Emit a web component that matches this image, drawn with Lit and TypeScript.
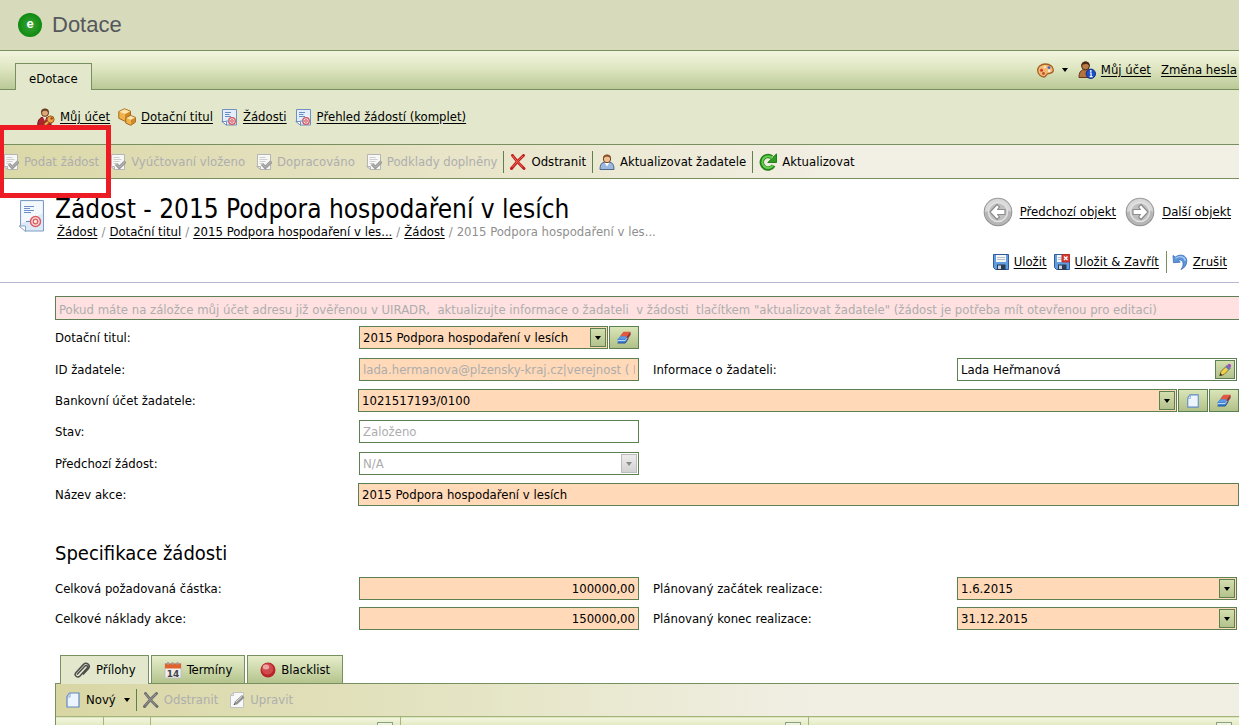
import { LitElement, html, css, svg, TemplateResult } from "lit";
import { customElement } from "lit/decorators.js";

const icon = (size: number, body: TemplateResult) =>
  html`<svg class="icon" width=${size} height=${size} viewBox="0 0 ${size} ${size}" aria-hidden="true">${body}</svg>`;

const userKeyIcon = () => icon(18, svg`
  <path d="M.8 17.500c-.4-4.500 1.700-7.500 4.400-8.200l2.600 1 2.400-1c2.800.7 4.100 3.700 3.900 8.200z" fill="#a9262c" stroke="#75151b"/>
  <path d="M5.800 8.500l2 4.500 1.900-4.500z" fill="#f4e8df"/>
  <circle cx="8" cy="4.900" r="3.500" fill="#dfa878" stroke="#5d3a1e"/>
  <path d="M4 5C3.800 1.500 6 .4 8 .4s4.200 1 3.900 4.600c-1-1.800-2.400-2.200-3.900-2.200S5 3.200 4 5z" fill="#6b3f20"/>
  <path d="M7.500 17.200l4.200-3.800" stroke="#a35a17" stroke-width="3.400"/><path d="M8 16.700l3.800-3.400" stroke="#f0b45c" stroke-width="1.600"/>
  <circle cx="13.600" cy="11.400" r="3.500" fill="#eda64c" stroke="#a35a17"/><circle cx="14.600" cy="10.400" r="1.200" fill="#8b4a10"/>`);

const boxesIcon = () => icon(18, svg`
  <path d="M.8 3.500L6.500.8l6 2.400v6.600l-5.500 3.500-6.200-3z" fill="#f0b24c" stroke="#a5691a"/>
  <path d="M1.400 3.700L6.500 1.300l5.500 2.100-5 2.700z" fill="#fde5ad"/><path d="M7.100 6.300l4.900-2.600v5.800l-4.900 3.200z" fill="#cf8825"/>
  <path d="M7.800 9.800l4.700-2.300 4.900 1.900v4.800l-4.500 3.100-5.100-2.200z" fill="#f0b24c" stroke="#a5691a"/>
  <path d="M8.500 10l4-1.900 4.200 1.500-3.900 2.200z" fill="#fde7b0"/><path d="M13 12.100l3.900-2.200v4l-3.900 2.700z" fill="#cf8825"/>`);

const requestIcon = () => icon(17, svg`
  <path d="M1.500.500h14v15.500H5.500l-4-3.500z" fill="#e3eefa" stroke="#7190bd"/>
  <path d="M.8 12.500h4.700v3.700z" fill="#fff" stroke="#7190bd"/>
  <path d="M4 3.500h6M4 5.500h4.500M4 7.500h6" stroke="#6a8cc4"/>
  <circle cx="11" cy="12" r="3.300" fill="#f9dcdc" stroke="#d0575f" stroke-width="1.300"/><circle cx="11" cy="12" r="1.300" fill="none" stroke="#d0575f"/>
  <path d="M5 12h4" stroke="#8296bb"/>`);

const bigRequestIcon = () => html`<svg class="icon" width="28" height="34" viewBox="0 0 28 34" aria-hidden="true">
  <path d="M2.500 1.500h23v30.500h-18l-5-5z" fill="#dce9f7" stroke="#7f9cc0"/>
  <path d="M3.500 2.500h21v12l-21 10z" fill="#f3f8fd"/>
  <path d="M1 27h6.500v5.500z" fill="#fff" stroke="#8aa0c0"/>
  <path d="M6 7.500h10M6 9.500h6M6 11.500h10M6 13.500h7" stroke="#6f8fca"/>
  <path d="M8 22.500h6" stroke="#7089bb"/>
  <circle cx="17.500" cy="22.500" r="5" fill="#fbe6e6" stroke="#dc5b62" stroke-width="1.500"/><circle cx="17.500" cy="22.500" r="2.300" fill="none" stroke="#dc5b62" stroke-width="1.300"/></svg>`;

const checkDocIcon = () => icon(16, svg`
  <path d="M1.500.500h13v15h-10l-3-3z" fill="#f7f7f6" stroke="#b5b5b5"/>
  <path d="M3.500 3.500h6M3.500 5.500h8M3.500 7.500h6M3.500 9.500h3" stroke="#cfcfcf"/>
  <path d="M6 10l3.300 3.500L15.500 7.500" fill="none" stroke="#9a9a9a" stroke-width="3.200"/><path d="M6.300 10.200l3 3 5.700-5.500" fill="none" stroke="#bdbdbd"/>
  <path d="M.7 12.500h3.800v3z" fill="#e4e4e4" stroke="#b5b5b5"/>`);

const crossIcon = (dark: string, light: string) => icon(16, svg`
  <path d="M2.500 1.500C5 5 9 10 14 14.500M13.500 1.500C9.500 5 5 10 1.500 14.500" fill="none" stroke=${dark} stroke-width="2.900" stroke-linecap="round"/>
  <path d="M2.700 2C5.200 5.300 8.500 9.300 12.500 13M12.800 2.200C9.500 5 5.500 9.500 2.500 13" fill="none" stroke=${light} stroke-width="1" stroke-linecap="round"/>`);

const userIcon = () => icon(16, svg`
  <path d="M1 15.500c0-4 1-6.700 4-7.200h6c3 .5 4 3.200 4 7.200z" fill="#9db8dd" stroke="#4d678f"/>
  <path d="M5.500 8.500L8 12.500l2.500-4z" fill="#fff"/>
  <circle cx="8" cy="5" r="3.700" fill="#efc195" stroke="#6b4424"/>
  <path d="M4 5C3.800 1.500 6 .4 8 .4s4.300 1 4 4.600c-1-1.800-2-2.300-4-2.300S5 3.200 4 5z" fill="#8a532b"/>`);

const userInfoIcon = () => icon(18, svg`
  <path d="M1 16.500c0-5 1.800-7.300 4.500-7.800h4c3 .5 4 4 4 7.800z" fill="#b5713f" stroke="#64371a"/>
  <circle cx="7.500" cy="4.900" r="3.900" fill="#b97a48" stroke="#4c2a13"/>
  <path d="M3.400 5.500C3.200 1.500 5.500.4 7.600.4s4.300 1 4.100 5.100C10.700 3.600 9.500 3 7.500 3s-3.200.7-4.100 2.500z" fill="#4a2a15"/>
  <circle cx="12.800" cy="12.800" r="4.700" fill="#1c4fc4" stroke="#0c2d86"/>
  <path d="M11.800 12h1.300v3.700M11.600 15.700h3" fill="none" stroke="#fff" stroke-width="1.200"/><circle cx="12.800" cy="10" r=".9" fill="#fff"/>`);

const reloadIcon = () => icon(18, svg`
  <path d="M14.500 12.500A6.300 6.300 0 1 1 12.800 4.200" fill="none" stroke="#237f18" stroke-width="4.400"/>
  <path d="M17.500.800v8.700H8.800z" fill="#2f9b23" stroke="#237f18"/>
  <path d="M14 12.500A5.900 5.900 0 1 1 13.500 5" fill="none" stroke="#63cf50" stroke-width="2"/>`);

const paletteIcon = () => icon(17, svg`
  <path d="M8.500 2C4 2 .7 4.800.7 8.500S4 15 7 15c2.400 0 2-2.400 3.500-3.200 2-1 5.800.2 5.800-3.800C16.300 4.500 13 2 8.500 2z" fill="#f3b878" stroke="#a45e22" stroke-width="1.300"/>
  <circle cx="4.500" cy="8.200" r="1.500" fill="#d23a22"/><circle cx="7.800" cy="5" r="1.400" fill="#fbe3a6"/><circle cx="12" cy="5.600" r="1.400" fill="#3c66c8"/><circle cx="6.500" cy="11.500" r="1.400" fill="#c0541e"/><circle cx="12.200" cy="8.800" r="1.200" fill="#fff7e6"/>`);

const roundArrow = (d: string) => html`<svg class="icon" width="30" height="30" viewBox="0 0 30 30" aria-hidden="true">
  <circle cx="15" cy="15" r="14.300" fill="#8f8f8f"/><circle cx="15" cy="14.700" r="13.500" fill="#b6b6b6"/>
  <path d="M2 15a13 13 0 0 1 26 0c-6-5-15-3-26 0z" fill="#d9d9d9"/>
  <circle cx="15" cy="15" r="9.500" fill="#c0c0c0" stroke="#e2e2e2" stroke-width="1.500"/>
  <path d=${d} fill="#fff" stroke="#8d8d8d" stroke-width="1.200" stroke-linejoin="round"/></svg>`;
const prevIcon = () => roundArrow("M7 15l7-7.500 2.500 2.500-2 2.500H22v5h-7.500l2 2.500-2.500 2.500z");
const nextIcon = () => roundArrow("M23 15l-7-7.500-2.500 2.500 2 2.500H8v5h7.500l-2 2.500 2.500 2.500z");

const disk = svg`
  <path d="M.5.500h15v15H2.500l-2-2z" fill="#5f9ce0" stroke="#2f5a9c"/>
  <path d="M3 1h10v7H3z" fill="#f4f6f8"/><path d="M4 3.500h8M4 5.500h8" stroke="#b7bec8"/>
  <path d="M4 10.500h8.500V16H4z" fill="#2b3c55"/><path d="M5 11.500h3V15H5z" fill="#c9d3df"/>`;
const saveIcon = () => icon(16, disk);
const saveCloseIcon = () => icon(16, svg`${disk}
  <path d="M8 .5h7.500V8H8z" fill="#d93a34" stroke="#b3302b"/><path d="M10 2.500l3.500 3.500M13.500 2.500L10 6" stroke="#fff" stroke-width="1.300"/>`);
const undoIcon = () => icon(16, svg`
  <path d="M1.500 8.700L1 1.500 3.300 3C8-.5 14.800 1 14.800 7c0 3.500-2 7-5.800 8.500 1.500-2 2.300-4 2-6C10.700 6 8 5.500 6.200 6.500l2 1.700z" fill="#5d95dd" stroke="#3b6db3" stroke-width=".8"/>
  <path d="M3.500 4.300C7.500 1.500 13 2.500 13.300 7" fill="none" stroke="#a9caf3" stroke-width="1.300"/>`);

const eraserIcon = () => icon(14, svg`
  <path d="M.5 8.500L6.500 1H13l.5 3-5.500 8H1z" fill="#4384d5"/>
  <path d="M6.500.800h7L10 5.500H3z" fill="#e1583e"/><path d="M10 5.500L13.500.8v3L9 10z" fill="#a92d1e"/>
  <path d="M1.500 8L3.500 5.500H10L8 8z" fill="#5b9ae6"/><path d="M.8 9.500h7.400l2-2.500" fill="none" stroke="#bcd6f5"/><path d="M.5 12h7.800l3-4.500" fill="none" stroke="#1f4f94"/>`);
const pageIcon = (s = 16) => html`<svg class="icon" width=${s} height=${s} viewBox="0 0 16 16" aria-hidden="true">
  <path d="M4.500 1h9.500v14H2V4.500z" fill="#ecf4fd" stroke="#6188c3" stroke-width="1.200"/><path d="M2 5h3V1z" fill="#fff" stroke="#86a6d6"/></svg>`;
const pencilIcon = () => icon(14, svg`
  <path d="M2 12.500l1-4L9 2.500l3 3-6 6z" fill="#f3d24a" stroke="#6c5a25" stroke-width=".8"/>
  <path d="M9 2.500L10.500 1c1.500-.6 3 1 2.500 2.500L12 5.500z" fill="#a650c0"/><path d="M7.500 4l3 3 1.500-1.500-3-3z" fill="#5277c9"/>
  <path d="M1.500 13l.8-3 2.200 2.200z" fill="#3d3327"/>`);
const clipIcon = () => icon(18, svg`
  <path d="M4 13.500l8-8.500c1.500-1.400 3.500.4 2.200 2L7 15c-2.500 2.600-6.500-.6-4-3.600l7.500-8C13.500.8 18 4 15.500 7.500L10 13.500" fill="none" stroke="#4d4d4d" stroke-width="1.500"/>`);
const calendarIcon = () => html`<svg class="icon" width="18" height="18" viewBox="0 0 18 18" aria-hidden="true">
  <path d="M1 2.500h16v14.500H1z" fill="#efefef" stroke="#b9b9b9" stroke-width=".8"/><path d="M1 2.500h16v5H1z" fill="#e0632b"/>
  <path d="M3 1.200h2v2.500H3zM7.500 1.200h2v2.500h-2zM12.500 1.200h2v2.500h-2z" fill="#9a9a9a"/>
  <text x="9" y="15.500" text-anchor="middle" class="cal">14</text></svg>`;
const ballIcon = () => icon(16, svg`
  <circle cx="8" cy="8" r="7.500" fill="#b8242a"/><circle cx="7.500" cy="7" r="5.800" fill="#cf4a4c"/><ellipse cx="6" cy="5" rx="3.200" ry="2.500" fill="#eba5a2"/>`);
const editIcon = () => icon(16, svg`
  <path d="M4.500.500h10v15h-13v-12z" fill="#f8f8f6" stroke="#c2c2c2"/><path d="M1.500 3.500h3v-3z" fill="#e5e5e5" stroke="#c2c2c2"/>
  <path d="M5 12.500l1-3L13 3l2.500 2.500-7.500 7z" fill="#8f8f8f"/><path d="M7 10l6-5.500" stroke="#e2e2e2"/><path d="M4.500 13l2-.5-1.200-1.300z" fill="#444"/>`);

const arrow = () => html`<svg class="icon" width="6" height="4" viewBox="0 0 6 4" aria-hidden="true"><path d="M0 0h6L3 4z" fill="currentColor"/></svg>`;

@customElement("app-root")
export class AppRoot extends LitElement {
  static styles = css`
    :host {
      display: block;
      height: 100vh;
      overflow: hidden;
      background: #fff;
      color: #000;
      font: 13px/16px "DejaVu Sans Condensed", "Noto Sans", sans-serif;
      --line: #78905f;
      --field: #5d8053;
      --need: #ffd9b8;
    }
    * { box-sizing: border-box; }
    .icon { display: block; flex: none; }
    a { color: inherit; text-decoration: underline; text-underline-offset: 2px; }
    button { font: inherit; color: inherit; background: none; border: 0; padding: 0; display: flex; align-items: center; white-space: nowrap; }
    h1, h2 { margin: 0; font-weight: 400; }

    .brand { height: 50px; display: flex; align-items: center; gap: 10px; padding-left: 18px; background: #d7dbbb; }
    .brand-name { font: 22px/28px "Liberation Sans", Arial, sans-serif; color: #55575c; }
    .badge { width: 24px; height: 24px; border-radius: 50%; background: radial-gradient(circle at 50% 50%, #3ba437, #108a10 70%); color: #fff; font: bold 13px/22px "Liberation Sans", Arial, sans-serif; text-align: center; }

    .tabbar { height: 40px; display: flex; align-items: flex-end; justify-content: space-between; padding: 0 2px 0 15px; background: linear-gradient(#f1f5de, #dfe6c2 45%, #bac996); border-top: 1px solid var(--line); border-bottom: 1px solid var(--line); }
    .main-tab { height: 27px; margin-bottom: -1px; padding: 0 13px; border: 1px solid var(--line); border-bottom: 0; background: #e3e8cc; text-decoration: none; line-height: 30px; }
    .account { display: flex; align-items: center; align-self: center; gap: 10px; }
    .pair { display: flex; align-items: center; gap: 5px; white-space: nowrap; }
    .skin { gap: 8px; }

    .subnav { height: 54px; display: flex; align-items: center; gap: 8px; padding-left: 37px; background: #e3e8cc; }
    .strip { position: relative; height: 35px; display: flex; align-items: center; gap: 6px; padding-left: 3px; border-top: 1px solid var(--line); border-bottom: 1px solid var(--line); background: linear-gradient(90deg, #dbd8a8, #f2efe4 840px); }
    .group { display: flex; align-items: center; gap: 11px; }
    .group button, .strip > button { gap: 5px; }
    .sep { width: 1px; height: 22px; background: var(--field); }
    button:disabled { color: #aeaeae; }
    .frame { position: absolute; z-index: 2; left: -1px; top: -20px; width: 112px; height: 73px; border: 5px solid #ed1c24; pointer-events: none; }

    .title { height: 104px; display: flex; justify-content: space-between; border-bottom: 1px solid #b2b8cf; }
    .heading { display: flex; padding: 14px 0 0 18px; gap: 9px; }
    .heading > .icon { margin-top: 6px; }
    h1 { font-size: 26px; line-height: 32px; white-space: nowrap; }
    .crumbs { display: flex; gap: 4px; padding-left: 2px; color: #8f8f8f; white-space: nowrap; line-height: 14px; }
    .crumbs a { color: #000; }
    .actions { display: flex; flex-direction: column; align-items: flex-end; padding: 18px 8px 0 0; gap: 24px; }
    .steps { display: flex; gap: 9px; }
    .steps .pair { gap: 7px; }
    .saves { display: flex; align-items: center; gap: 7px; padding-right: 4px; }
    .saves .undo { display: flex; gap: 5px; }
    .saves .sep { background: var(--line); }

    .content { padding: 13px 0 0 55px; }
    .notice { height: 24px; border: 1px solid var(--field); border-right: 0; background: #ffe1e1; color: #adadad; padding-left: 3px; line-height: 25px; white-space: pre; overflow: hidden; }
    .rows { display: flex; flex-direction: column; gap: 8px; padding-top: 6px; }
    .row { display: grid; grid-template-columns: 304px minmax(0, 1fr) 318px minmax(0, 1fr); align-items: start; padding-right: 2px; min-height: 23px; }
    .roomy { min-height: 24px; }
    .wide { grid-template-columns: 303px minmax(0, 1fr); padding-right: 0; }
    label { line-height: 23px; }
    .label-2 { padding-left: 14px; }
    .combo { display: flex; gap: 1px; }
    .box { flex: 1; min-width: 0; display: flex; height: 23px; padding: 1px; border: 1px solid var(--field); background: #fff; }
    .need { background: var(--need); }
    input, select { appearance: none; flex: 1; width: 100%; min-width: 0; margin: 0; padding: 1px 2px 0; border: 0; border-radius: 0; background: none; font: inherit; color: #000; outline: 0; opacity: 1; }
    input:disabled, select:disabled { color: #adadad; }
    .num { text-align: right; }
    .drop { flex: none; width: 16px; display: flex; align-items: center; justify-content: center; border: 1px solid var(--field); background: linear-gradient(#d3dfae, #b3c28d); color: #000; }
    .drop.off { border-color: #bcbcbc; background: linear-gradient(#ececec, #d2d2d2); color: #8a8a8a; }
    .drop.pen { width: 20px; }
    .tool { flex: none; width: 30px; height: 23px; justify-content: center; border: 1px solid var(--field); background: linear-gradient(#dae5b8, #b1c088); }

    h2 { padding-top: 35px; font-size: 20px; line-height: 24px; }
    .spec { gap: 7px; padding-top: 12px; }

    .tabs { display: flex; gap: 2px; padding: 25px 0 0 5px; }
    .tab { height: 28px; gap: 5px; padding: 0 12px; border: 1px solid var(--line); border-bottom: 0; background: linear-gradient(#e6edcb, #b4c48c); line-height: 30px; }
    .tab.on { position: relative; z-index: 1; height: 29px; margin-bottom: -1px; background: #e3e8cc; }
    .panel { border-left: 1px solid var(--line); }
    .panel .strip { height: 33px; padding-left: 9px; border-bottom: 0; background: linear-gradient(90deg, #d9d6a4, #e5e5c6 430px, #f1efe4 760px); }
    .panel .new { gap: 5px; }
    .panel .new .arrow { padding-left: 3px; }
    table { width: 100%; table-layout: fixed; border-collapse: collapse; }
    th { height: 30px; padding: 5px 7px 0 0; border-top: 1px solid #a5b478; border-left: 1px solid #a5b478; background: linear-gradient(#f3f7df, #dfe6bd 10px, #c5d19f); vertical-align: top; }
    th:first-child { border-left: 0; }
    .filter { display: block; width: 16px; height: 18px; margin-left: auto; border: 1px solid #8aa283; background: #eff3dd; }
    .c1, .c2 { width: 47px; }
    .c3 { width: 250px; }
    .c4 { width: 408px; }
    .cal { font: bold 9px "DejaVu Sans", sans-serif; fill: #444; }
  `;

  private link(ic: TemplateResult, text: string) {
    return html`<span class="pair">${ic}<a href="#">${text}</a></span>`;
  }

  render() {
    return html`
      <header>
        <div class="brand"><span class="badge">e</span><span class="brand-name">Dotace</span></div>
        <div class="tabbar">
          <a class="main-tab" href="#">eDotace</a>
          <div class="account">
            <button class="pair skin" aria-label="Vzhled">${paletteIcon()}${arrow()}</button>
            ${this.link(userInfoIcon(), "Můj účet")}
            <a href="#">Změna hesla</a>
          </div>
        </div>
        <nav class="subnav">
          ${this.link(userKeyIcon(), "Můj účet")}
          ${this.link(boxesIcon(), "Dotační titul")}
          ${this.link(requestIcon(), "Žádosti")}
          ${this.link(requestIcon(), "Přehled žádostí (komplet)")}
        </nav>
      </header>
      <div class="strip">
        <div class="group">
          ${["Podat žádost", "Vyúčtovaní vloženo", "Dopracováno", "Podklady doplněny"].map(
            (t) => html`<button disabled>${checkDocIcon()}${t}</button>`
          )}
        </div>
        <span class="sep"></span>
        <button>${crossIcon("#c01d1d", "#ef6a5f")}Odstranit</button>
        <span class="sep"></span>
        <button>${userIcon()}Aktualizovat žadatele</button>
        <span class="sep"></span>
        <button>${reloadIcon()}Aktualizovat</button>
        <div class="frame"></div>
      </div>
      <section class="title">
        <div class="heading">
          ${bigRequestIcon()}
          <div>
            <h1>Žádost - 2015 Podpora hospodaření v lesích</h1>
            <nav class="crumbs">
              <a href="#">Žádost</a><span>/</span><a href="#">Dotační titul</a><span>/</span>
              <a href="#">2015 Podpora hospodaření v les...</a><span>/</span><a href="#">Žádost</a><span>/</span>
              <span>2015 Podpora hospodaření v les...</span>
            </nav>
          </div>
        </div>
        <div class="actions">
          <div class="steps">${this.link(prevIcon(), "Předchozí objekt")}${this.link(nextIcon(), "Další objekt")}</div>
          <div class="saves">
            ${this.link(saveIcon(), "Uložit")}${this.link(saveCloseIcon(), "Uložit & Zavřít")}
            <span class="undo"><span class="sep"></span>${this.link(undoIcon(), "Zrušit")}</span>
          </div>
        </div>
      </section>
      <main class="content">
        <div class="notice">Pokud máte na záložce můj účet adresu již ověřenou v UIRADR,  aktualizujte informace o žadateli  v žádosti  tlačítkem "aktualizovat žadatele" (žádost je potřeba mít otevřenou pro editaci)</div>
        <div class="rows">
          <div class="row roomy">
            <label for="grant">Dotační titul:</label>
            <div class="combo">
              <div class="box need"><select id="grant"><option>2015 Podpora hospodaření v lesích</option></select><span class="drop">${arrow()}</span></div>
              <button class="tool" aria-label="Vymazat">${eraserIcon()}</button>
            </div>
          </div>
          <div class="row">
            <label for="applicant">ID žadatele:</label>
            <div class="box need"><input id="applicant" disabled value="lada.hermanova@plzensky-kraj.cz|verejnost ( Heřmanová )" /></div>
            <label class="label-2" for="info">Informace o žadateli:</label>
            <div class="box"><input id="info" value="Lada Heřmanová" /><button class="drop pen" aria-label="Upravit">${pencilIcon()}</button></div>
          </div>
          <div class="row wide">
            <label for="bank">Bankovní účet žadatele:</label>
            <div class="combo">
              <div class="box need"><select id="bank"><option>1021517193/0100</option></select><span class="drop">${arrow()}</span></div>
              <button class="tool" aria-label="Nový">${pageIcon(14)}</button>
              <button class="tool" aria-label="Vymazat">${eraserIcon()}</button>
            </div>
          </div>
          <div class="row roomy">
            <label for="state">Stav:</label>
            <div class="box"><input id="state" disabled value="Založeno" /></div>
          </div>
          <div class="row">
            <label for="previous">Předchozí žádost:</label>
            <div class="box"><select id="previous" disabled><option>N/A</option></select><span class="drop off">${arrow()}</span></div>
          </div>
          <div class="row wide">
            <label for="name">Název akce:</label>
            <div class="box need"><input id="name" value="2015 Podpora hospodaření v lesích" /></div>
          </div>
        </div>
        <h2>Specifikace žádosti</h2>
        <div class="rows spec">
          <div class="row">
            <label for="amount">Celková požadovaná částka:</label>
            <div class="box need"><input id="amount" class="num" value="100000,00" /></div>
            <label class="label-2" for="start">Plánovaný začátek realizace:</label>
            <div class="box need"><input id="start" value="1.6.2015" /><button class="drop" aria-label="Kalendář">${arrow()}</button></div>
          </div>
          <div class="row">
            <label for="cost">Celkové náklady akce:</label>
            <div class="box need"><input id="cost" class="num" value="150000,00" /></div>
            <label class="label-2" for="end">Plánovaný konec realizace:</label>
            <div class="box need"><input id="end" value="31.12.2015" /><button class="drop" aria-label="Kalendář">${arrow()}</button></div>
          </div>
        </div>
        <div class="tabs">
          <button class="tab on">${clipIcon()}Přílohy</button>
          <button class="tab">${calendarIcon()}Termíny</button>
          <button class="tab">${ballIcon()}Blacklist</button>
        </div>
        <div class="panel">
          <div class="strip">
            <button class="new">${pageIcon()}Nový<span class="arrow">${arrow()}</span></button>
            <span class="sep"></span>
            <div class="group">
              <button disabled>${crossIcon("#6e6e6e", "#9a9a9a")}Odstranit</button>
              <button disabled>${editIcon()}Upravit</button>
            </div>
          </div>
          <table>
            <colgroup><col class="c1" /><col class="c2" /><col class="c3" /><col class="c4" /><col /></colgroup>
            <thead>
              <tr>
                <th></th><th></th>
                <th><span class="filter"></span></th><th><span class="filter"></span></th><th><span class="filter"></span></th>
              </tr>
            </thead>
          </table>
        </div>
      </main>
    `;
  }
}
